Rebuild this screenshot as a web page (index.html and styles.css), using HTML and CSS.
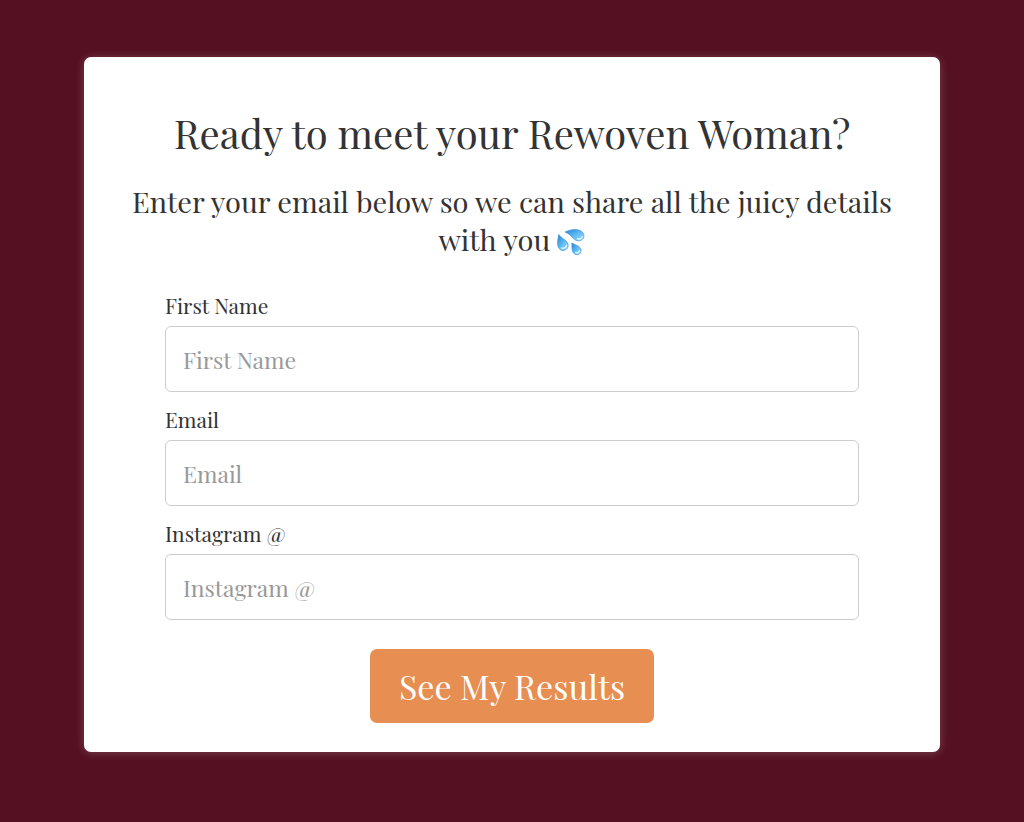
FILE: index.html
```html
<!DOCTYPE html>
<html lang="en">
<head>
    <meta charset="UTF-8">
    <meta name="viewport" content="width=device-width, initial-scale=1">
    <title>Rewoven Woman</title>
    <link rel="stylesheet" href="styles.css">
</head>
<body>
    <main class="card">
        <h1 class="title">Ready to meet your Rewoven Woman?</h1>
        <p class="subtitle">
            Enter your email below so we can share all the juicy details with you
            <svg class="drops" viewBox="0 0 28 28" role="img" aria-label="Sweat droplets">
                <defs>
                    <linearGradient id="water" x1="0" y1="0" x2="1" y2="1">
                        <stop offset="0" stop-color="#2b83d6"/>
                        <stop offset="0.5" stop-color="#5cb8f2"/>
                        <stop offset="1" stop-color="#a5e2fc"/>
                    </linearGradient>
                </defs>
                <g fill="url(#water)" stroke="#3a92dc" stroke-width="0.7">
                    <path d="M8 4C13.500 1.500 19 0.800 23 2.500C27 4.300 28 8.300 25.700 11C23.300 13.700 19 13.200 16.500 10.500C14 7.500 11.500 5.500 8 4Z"/>
                    <path d="M1.700 6.500C0.900 11 0.200 15 1 18.300C1.900 21.800 5.500 23.500 8.500 21.800C11.500 20 12 16.800 9.800 13.800C7.500 11 4.200 10 1.700 6.500Z"/>
                    <path d="M14.800 15C15.100 18 14.700 20.500 15.500 23C16.500 26 19.200 27.400 21.700 26.300C24.200 25.200 24.800 22 23 19.700C21 17.200 17.800 17 14.800 15Z"/>
                </g>
                <g fill="none" stroke="#d8f4ff" stroke-width="1.5" stroke-linecap="round">
                    <path d="M20.500 10.700C22.500 11.700 24.500 10.800 25.300 8.800"/>
                    <path d="M4.500 20C6.800 21 9 19.700 9.400 17.500"/>
                    <path d="M18.700 24.500C20.500 25.300 22.200 24.200 22.500 22.800"/>
                </g>
            </svg>
        </p>

        <form class="form">
            <div class="field">
                <label for="firstName">First Name</label>
                <input type="text" id="firstName" placeholder="First Name">
            </div>
            <div class="field">
                <label for="email">Email</label>
                <input type="email" id="email" placeholder="Email">
            </div>
            <div class="field">
                <label for="instagram">Instagram @</label>
                <input type="text" id="instagram" placeholder="Instagram @">
            </div>
            <button class="submit" type="submit">See My Results</button>
        </form>
    </main>
</body>
</html>
```
FILE: styles.css
```css
* {
    box-sizing: border-box;
}

body {
    margin: 0;
    padding: 57px 84px;
    background-color: #551122;
    color: #333;
    font-family: "Playfair Display", "Liberation Serif", serif;
}

.card {
    padding: 47px 40px 29px;
    background-color: #fff;
    border-radius: 7px;
    box-shadow: 0 1px 10px rgba(255, 255, 255, 0.2);
}

.title {
    margin: 0 0 20px;
    font-size: 40px;
    font-weight: normal;
    line-height: 58px;
    text-align: center;
}

.subtitle {
    margin: 0 0 34px;
    font-size: 29px;
    line-height: 38px;
    text-align: center;
}

.drops {
    width: 28px;
    height: 28px;
    vertical-align: -5px;
}

.form {
    display: flex;
    flex-direction: column;
    padding: 0 41px;
}

.field {
    display: flex;
    flex-direction: column;
    margin-bottom: 14px;
}

.field label {
    margin-bottom: 7px;
    font-size: 21px;
    line-height: 27px;
}

.field input {
    height: 66px;
    padding: 0 17px;
    border: 1px solid #ccc;
    border-radius: 6px;
    background-color: #fff;
    color: #333;
    font-family: inherit;
    font-size: 23px;
}

.field input::placeholder {
    color: #999;
}

.submit {
    align-self: center;
    height: 74px;
    margin-top: 15px;
    padding: 0 29px;
    border: 0;
    border-radius: 7px;
    background-color: #e78e52;
    color: #fff;
    font-family: inherit;
    font-size: 34px;
    cursor: pointer;
}
```
